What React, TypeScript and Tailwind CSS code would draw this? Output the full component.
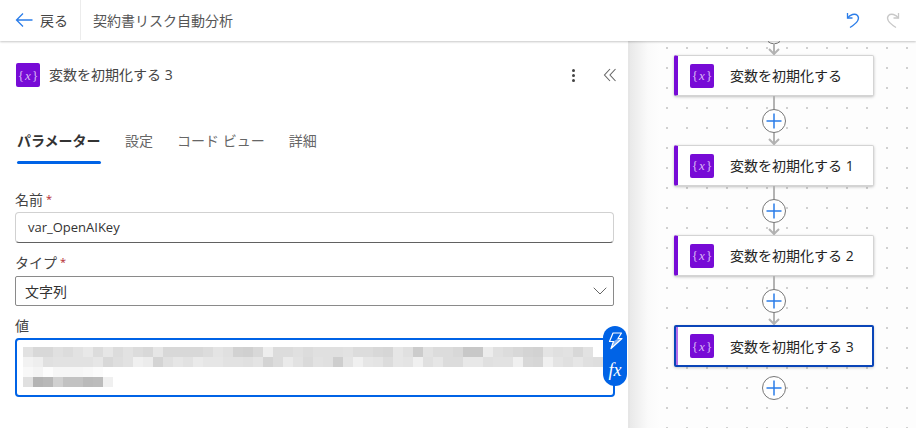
import { ChevronDown } from "lucide-react";

const FONT = "font-['Open_Sans','Noto_Sans_CJK_JP',sans-serif]";

const MOSAIC = [
  ["e2","d8","d8","e0","dc","e2","e8","dc","e6","dc","e2","dc","d8","e6","d8","d8","d8","d8","dc","e4","e0","d2","d0","d8","ee","dc","dc","e0","dc","e0","e0","e0","e2","dc","dc","d8","d6","e6","e0","cc","e2","dc","dc","d8","c8","c8","ec","e0","dc","d8","d4","d2","e4","e0","e2","d8","e2"],
  ["f2","ee","e0","e2","e2","e2","e2","e6","d8","de","e2","f0","ec","d4","e0","e6","e2","ea","e6","e6","e2","e2","e0","e4","d4","dc","ea","e2","da","e2","e0","ce","e4","f0","e6","e4","dc","e6","e4","f0","e0","e6","dc","dc","e8","e8","e0","e2","e2","f0","d8","d6","f0","e4","e0","e6","e0","de"],
  ["f8","f4","fc","f6","f6","f6","f8","fb"],
  ["e0","b4","b8","d0","c2","c2","ba","bc","f0"],
];

function VarIcon() {
  return (
    <div className="w-6 h-6 flex-shrink-0 rounded-[2px] bg-[#770bd6] flex items-center justify-center text-[13px] leading-none text-[#d9b8f5] font-['Liberation_Serif',serif]">
      {"{"}
      <span className="italic mx-px">x</span>
      {"}"}
    </div>
  );
}

function Connector() {
  return (
    <svg width="26" height="49" viewBox="0 0 26 49" className="block">
      <path d="M13 0V48" stroke="#b3b3b3" strokeWidth="2" fill="none" />
      <path d="M8 43L13 48L18 43" stroke="#b3b3b3" strokeWidth="2" fill="none" />
      <circle cx="13" cy="25" r="11.5" fill="#fff" stroke="#777" strokeWidth="1" />
      <path d="M13 17.5V32.5M5.5 25H20.5" stroke="#2b7de9" strokeWidth="1.5" fill="none" />
    </svg>
  );
}

function FlowNode({ label, selected }: { label: string; selected?: boolean }) {
  if (selected) {
    return (
      <div className="w-[200px] h-[42px] flex items-center bg-white rounded-[2px] border-2 border-[#0a45b8] shadow-[0_1px_3px_rgba(0,0,0,0.2)]">
        <div className="w-[2px] h-full bg-[#b56ee8]" />
        <div className="ml-[12px]">
          <VarIcon />
        </div>
        <span className="ml-[16px] text-[14px] text-[#242424] whitespace-nowrap">{label}</span>
      </div>
    );
  }
  return (
    <div className="w-[200px] h-[41px] flex items-center bg-white rounded-[2px] border border-[#d4d4d4] border-l-4 border-l-[#770bd6] shadow-[0_1px_3px_rgba(0,0,0,0.25)]">
      <div className="ml-[12px]">
        <VarIcon />
      </div>
      <span className="ml-[16px] text-[14px] text-[#242424] whitespace-nowrap">{label}</span>
    </div>
  );
}

export default function App() {
  return (
    <div className={`w-[916px] h-[428px] overflow-hidden bg-white flex flex-col ${FONT}`}>
      {/* Header */}
      <header className="h-[41px] flex-shrink-0 pb-px relative z-10 flex items-center bg-white shadow-[0_1px_2px_rgba(0,0,0,0.22)]">
        <div className="w-[81px] h-full flex items-center pl-[15px] border-r border-[#ececec]">
          <svg width="18" height="16" viewBox="0 0 18 16" fill="none" stroke="#2b7de9" strokeWidth="1.3">
            <path d="M1.5 8H17.5M8 1.5L1.5 8L8 14.5" />
          </svg>
          <span className="ml-[7px] text-[14px] text-[#444]">戻る</span>
        </div>
        <span className="ml-[12px] text-[14px] text-[#555]">契約書リスク自動分析</span>
        <div className="ml-auto flex items-center gap-[22px] pr-[14px]">
          <svg width="18" height="18" viewBox="0 0 18 18" fill="none" stroke="#2b7de9" strokeWidth="1.3">
            <path d="M3.5 2V7H8.5" />
            <path d="M3.5 7C6 3.5 11 2 13.5 4.5C16 7.5 14 11.5 6 16.5" />
          </svg>
          <svg width="18" height="18" viewBox="0 0 18 18" fill="none" stroke="#c8c8c8" strokeWidth="1.3">
            <path d="M14.5 2V7H9.5" />
            <path d="M14.5 7C12 3.5 7 2 4.5 4.5C2 7.5 4 11.5 12 16.5" />
          </svg>
        </div>
      </header>

      <div className="flex-1 flex min-h-0">
        {/* Left panel */}
        <section className="w-[630px] flex-shrink-0 bg-white border-r-2 border-[#e6e6e6] px-[15px] relative">
          <div className="mt-[22px] pl-px h-6 flex items-center">
            <VarIcon />
            <span className="ml-[9px] mb-[2px] text-[14px] text-[#444] whitespace-nowrap">変数を初期化する 3</span>
            <div className="ml-auto flex items-center">
              <div className="flex flex-col gap-[2px]">
                <span className="w-[3px] h-[3px] rounded-full bg-[#444]" />
                <span className="w-[3px] h-[3px] rounded-full bg-[#444]" />
                <span className="w-[3px] h-[3px] rounded-full bg-[#444]" />
              </div>
              <svg width="14" height="14" viewBox="0 0 14 14" fill="none" stroke="#666" strokeWidth="1.1" className="ml-[28px] mr-[-4px]">
                <path d="M7 1L1.5 7L7 13M12.5 1L7 7L12.5 13" />
              </svg>
            </div>
          </div>

          {/* Tabs */}
          <div className="mt-[34px] pl-[2px] flex items-start text-[14px] text-[#666] whitespace-nowrap">
            <div className="w-[84px] flex flex-col">
              <span className="h-[40px] pt-[8px] font-bold text-[#333] leading-[24px]">パラメーター</span>
              <div className="h-[3px] rounded-full bg-[#0063e6]" />
            </div>
            <span className="ml-[24px] pt-[8px] leading-[24px]">設定</span>
            <span className="ml-[24px] pt-[8px] leading-[24px]">コード ビュー</span>
            <span className="ml-[24px] pt-[8px] leading-[24px]">詳細</span>
          </div>

          {/* Form */}
          <label className="mt-[25px] h-5 flex items-center text-[14px] text-[#444]">
            名前<span className="ml-[3px] text-[11px] text-[#b3262e]">*</span>
          </label>
          <div className="mt-[3px] w-[599px] h-[31px] flex items-center pl-[12px] rounded-[4px] border border-[#d1d1d1] border-b-[#616161] text-[13px] text-[#333]">
            var_OpenAIKey
          </div>
          <label className="mt-[9px] h-5 flex items-center text-[14px] text-[#444]">
            タイプ<span className="ml-[3px] text-[11px] text-[#b3262e]">*</span>
          </label>
          <div className="mt-[4px] w-[599px] h-[30px] flex items-center justify-between pl-[9px] pr-px rounded-[2px] border border-[#8a8a8a] text-[14px] text-[#333]">
            文字列
            <ChevronDown size={24} strokeWidth={1} className="text-[#666]" />
          </div>
          <label className="mt-[9px] h-5 flex items-center text-[14px] text-[#444]">値</label>
          <div className="mt-[3px] w-[600px] h-[59px] rounded-[4px] border-2 border-[#0063e6] pl-[6px] pt-[7px] flex flex-col">
            {MOSAIC.map((row, i) => (
              <div key={i} className="flex h-[10px]">
                {row.map((c, j) => (
                  <div key={j} className="w-[10px] h-[10px]" style={{ backgroundColor: `#${c}${c}${c}` }} />
                ))}
              </div>
            ))}
          </div>

          {/* Token / expression buttons */}
          <div className="absolute left-[603px] top-[285px] w-6 h-[60px] rounded-[12px] bg-[#0063e6] flex flex-col items-center pt-[6px] text-white">
            <svg width="16" height="18" viewBox="0 0 16 18" fill="none" stroke="#fff" strokeWidth="1.2" strokeLinejoin="round">
              <path d="M6 1H14.5L11 6.5H15L4 16.5L6.5 9.5H2.5Z" />
              <path d="M11 6.5H15L4 16.5L6.5 9.5Z" fill="#fff" fillOpacity="0.5" stroke="none" />
            </svg>
            <span className="mt-[8px] text-[18px] leading-[24px] italic font-['Liberation_Serif',serif]">fx</span>
          </div>
        </section>

        {/* Canvas */}
        <main className="flex-1 min-w-0 pl-[44px] overflow-hidden bg-[#fdfdfd] bg-[linear-gradient(to_right,#e9e9e9,#fafafa_18px,rgba(255,255,255,0)_30px),radial-gradient(circle,#b0b0b0_0.5px,rgba(255,255,255,0)_1px)] bg-[size:100%_100%,20px_20px] bg-[position:0_0,7px_-3px]">
          <div className="w-[200px] flex flex-col items-center">
            <svg width="26" height="14" viewBox="0 0 26 14" className="block">
              <path d="M7 0.5A9 9 0 0 0 19 0.5" stroke="#777" fill="none" />
              <path d="M13 2V13M8 8L13 13L18 8" stroke="#b3b3b3" strokeWidth="2" fill="none" />
            </svg>
            <FlowNode label="変数を初期化する" />
            <Connector />
            <FlowNode label="変数を初期化する 1" />
            <Connector />
            <FlowNode label="変数を初期化する 2" />
            <Connector />
            <FlowNode label="変数を初期化する 3" selected />
            <svg width="26" height="26" viewBox="0 0 26 26" className="block mt-[8px]">
              <circle cx="13" cy="13" r="11.5" fill="#fff" stroke="#777" />
              <path d="M13 5.5V20.5M5.5 13H20.5" stroke="#2b7de9" strokeWidth="1.5" fill="none" />
            </svg>
          </div>
        </main>
      </div>
    </div>
  );
}
